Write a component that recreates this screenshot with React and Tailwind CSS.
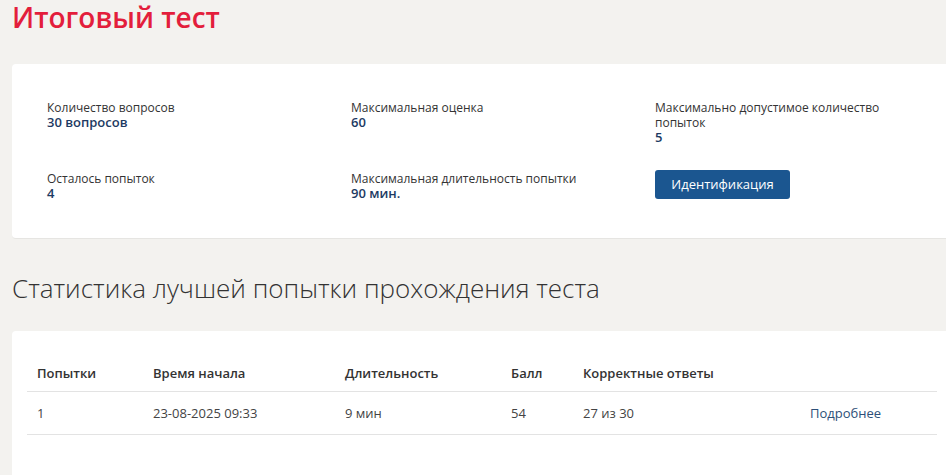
import React from "react";

const font = { fontFamily: '"Open Sans", "Noto Sans", sans-serif' };

function Item({ label, value }) {
  return (
    <div className="w-[250px]">
      <div className="text-[12px] leading-[15px] text-[#333]">{label}</div>
      <div className="text-[13px] leading-[15px] font-semibold text-[#1d3a63]">{value}</div>
    </div>
  );
}

export default function App() {
  return (
    <div className="min-h-[475px] bg-[#f3f2ef] pl-3 overflow-hidden" style={font}>
      <h1 className="pt-px text-[28px] leading-[33px] text-[#e31e3c] font-semibold">Итоговый тест</h1>
      <div className="mt-[30px] w-[960px] bg-white rounded-[4px] border-b border-[#e6e5e2] pl-[35px] pt-[36px] pb-[37px]">
        <div className="grid grid-cols-[304px_304px_304px] gap-y-[25px] items-start">
          <Item label="Количество вопросов" value="30 вопросов" />
          <Item label="Максимальная оценка" value="60" />
          <div className="w-[240px]">
            <div className="text-[12px] leading-[15px] text-[#333]">Максимально допустимое количество попыток</div>
            <div className="text-[13px] leading-[15px] font-semibold text-[#1d3a63]">5</div>
          </div>
          <div className="pt-px">
            <Item label="Осталось попыток" value="4" />
          </div>
          <div className="pt-px">
            <Item label="Максимальная длительность попытки" value="90 мин." />
          </div>
          <div>
            <button className="h-[29px] w-[135px] rounded-[3px] bg-[#1b5690] text-white text-[13px] font-medium">
              Идентификация
            </button>
          </div>
        </div>
      </div>
      <h2 className="mt-[34px] text-[26px] leading-[30px] font-light text-[#333]">
        Статистика лучшей попытки прохождения теста
      </h2>
      <div className="mt-[28px] w-[960px] bg-white rounded-[4px] pl-[15px] pt-[24px] pb-[60px]">
        <table className="w-[910px] border-collapse text-[13px] leading-[18px]">
          <thead>
            <tr className="border-b border-[#e3e3e3] text-left text-[#333] font-semibold">
              <th className="w-[116px] pl-[10px] pt-[9px] pb-[9px] font-semibold">Попытки</th>
              <th className="w-[192px] pl-[10px] pt-[9px] pb-[9px] font-semibold">Время начала</th>
              <th className="w-[166px] pl-[10px] pt-[9px] pb-[9px] font-semibold">Длительность</th>
              <th className="w-[72px] pl-[10px] pt-[9px] pb-[9px] font-semibold">Балл</th>
              <th className="w-[227px] pl-[10px] pt-[9px] pb-[9px] font-semibold">Корректные ответы</th>
              <th className="pl-[10px] pt-[9px] pb-[9px]"></th>
            </tr>
          </thead>
          <tbody>
            <tr className="border-b border-[#e3e3e3] text-[#444]">
              <td className="pl-[10px] py-[12px]">1</td>
              <td className="pl-[10px] py-[12px]">23-08-2025 09:33</td>
              <td className="pl-[10px] py-[12px]">9 мин</td>
              <td className="pl-[10px] py-[12px]">54</td>
              <td className="pl-[10px] py-[12px]">27 из 30</td>
              <td className="pl-[10px] py-[12px]">
                <a className="text-[#2d4f78]">Подробнее</a>
              </td>
            </tr>
          </tbody>
        </table>
      </div>
    </div>
  );
}
